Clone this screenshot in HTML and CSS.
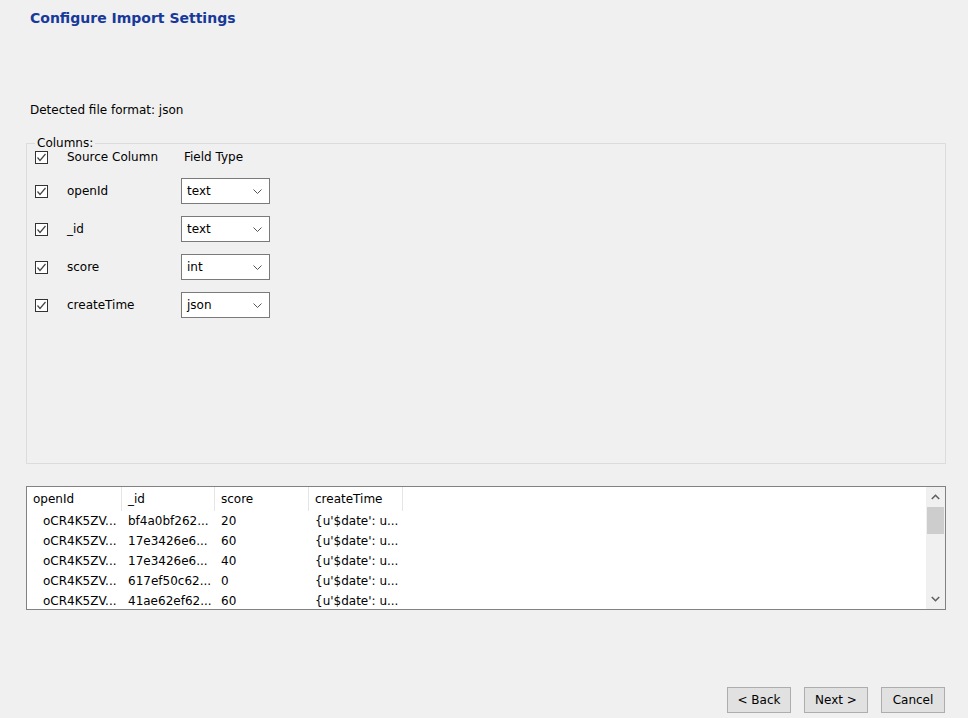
FILE: index.html
```html
<!DOCTYPE html>
<html>
<head>
<meta charset="utf-8">
<link rel="stylesheet" href="styles.css">
</head>
<body>
<div class="page">
  <h1 class="title">Configure Import Settings</h1>
  <p class="detected">Detected file format: json</p>

  <fieldset class="columns">
    <legend>Columns:</legend>
    <div class="row head">
      <span class="check"><svg viewBox="0 0 13 13" width="13" height="13"><polyline points="2.5,6.5 5,9.5 10.5,3" fill="none" stroke="#444" stroke-width="1.2"/></svg></span>
      <span class="name">Source Column</span>
      <span class="ftype">Field Type</span>
    </div>
    <div class="row">
      <span class="check"><svg viewBox="0 0 13 13" width="13" height="13"><polyline points="2.5,6.5 5,9.5 10.5,3" fill="none" stroke="#444" stroke-width="1.2"/></svg></span>
      <span class="name">openId</span>
      <span class="combo"><span>text</span><svg viewBox="0 0 9 5" width="9" height="5"><polyline points="0.5,0.5 4.5,4.5 8.5,0.5" fill="none" stroke="#555" stroke-width="1"/></svg></span>
    </div>
    <div class="row">
      <span class="check"><svg viewBox="0 0 13 13" width="13" height="13"><polyline points="2.5,6.5 5,9.5 10.5,3" fill="none" stroke="#444" stroke-width="1.2"/></svg></span>
      <span class="name">_id</span>
      <span class="combo"><span>text</span><svg viewBox="0 0 9 5" width="9" height="5"><polyline points="0.5,0.5 4.5,4.5 8.5,0.5" fill="none" stroke="#555" stroke-width="1"/></svg></span>
    </div>
    <div class="row">
      <span class="check"><svg viewBox="0 0 13 13" width="13" height="13"><polyline points="2.5,6.5 5,9.5 10.5,3" fill="none" stroke="#444" stroke-width="1.2"/></svg></span>
      <span class="name">score</span>
      <span class="combo"><span>int</span><svg viewBox="0 0 9 5" width="9" height="5"><polyline points="0.5,0.5 4.5,4.5 8.5,0.5" fill="none" stroke="#555" stroke-width="1"/></svg></span>
    </div>
    <div class="row">
      <span class="check"><svg viewBox="0 0 13 13" width="13" height="13"><polyline points="2.5,6.5 5,9.5 10.5,3" fill="none" stroke="#444" stroke-width="1.2"/></svg></span>
      <span class="name">createTime</span>
      <span class="combo"><span>json</span><svg viewBox="0 0 9 5" width="9" height="5"><polyline points="0.5,0.5 4.5,4.5 8.5,0.5" fill="none" stroke="#555" stroke-width="1"/></svg></span>
    </div>
  </fieldset>

  <div class="table">
    <div class="grid">
      <div class="thead">
        <div class="th">openId</div>
        <div class="th">_id</div>
        <div class="th">score</div>
        <div class="th">createTime</div>
      </div>
      <div class="tr"><div class="td first">oCR4K5ZV...</div><div class="td">bf4a0bf262...</div><div class="td">20</div><div class="td">{u'$date': u...</div></div>
      <div class="tr"><div class="td first">oCR4K5ZV...</div><div class="td">17e3426e6...</div><div class="td">60</div><div class="td">{u'$date': u...</div></div>
      <div class="tr"><div class="td first">oCR4K5ZV...</div><div class="td">17e3426e6...</div><div class="td">40</div><div class="td">{u'$date': u...</div></div>
      <div class="tr"><div class="td first">oCR4K5ZV...</div><div class="td">617ef50c62...</div><div class="td">0</div><div class="td">{u'$date': u...</div></div>
      <div class="tr"><div class="td first">oCR4K5ZV...</div><div class="td">41ae62ef62...</div><div class="td">60</div><div class="td">{u'$date': u...</div></div>
    </div>
    <div class="scrollbar">
      <svg class="arrow" viewBox="0 0 9 6" width="9" height="6"><polyline points="0.8,5 4.5,1.3 8.2,5" fill="none" stroke="#606060" stroke-width="1.6"/></svg>
      <div class="thumb"></div>
      <div class="track"></div>
      <svg class="arrow" viewBox="0 0 9 6" width="9" height="6"><polyline points="0.8,1 4.5,4.7 8.2,1" fill="none" stroke="#606060" stroke-width="1.6"/></svg>
    </div>
  </div>

  <div class="buttons">
    <button class="btn">&lt; Back</button>
    <button class="btn">Next &gt;</button>
    <button class="btn">Cancel</button>
  </div>
</div>
</body>
</html>
```

FILE: styles.css
```css
html, body {
  margin: 0;
  padding: 0;
  background: #f0f0f0;
}
body {
  font-family: "DejaVu Sans", Verdana, sans-serif;
  font-size: 12px;
  color: #000;
  width: 968px;
  height: 718px;
  overflow: hidden;
}
.page {
  display: flex;
  flex-direction: column;
}
.title {
  margin: 10px 0 0 30px;
  font-size: 14px;
  font-weight: bold;
  color: #17399a;
  line-height: 17px;
}
.detected {
  margin: 76px 0 0 30px;
  line-height: 14px;
}
.columns {
  margin: 19px 0 0 26px;
  width: 920px;
  box-sizing: border-box;
  height: 328px;
  border: 1px solid #dcdcdc;
  padding: 0 0 0 8px;
  display: flex;
  flex-direction: column;
}
.columns legend {
  padding: 0 2px;
  margin-left: 0;
  line-height: 14px;
}
.row {
  display: flex;
  align-items: center;
  height: 26px;
  margin-top: 12px;
}
.row.head {
  height: 18px;
  margin-top: -2px;
}
.check {
  width: 13px;
  height: 13px;
  box-sizing: border-box;
  border: 1px solid #333;
  background: #fff;
  display: flex;
}
.check svg {
  margin: -1px;
}
.name {
  margin-left: 19px;
  width: 114px;
}
.ftype {
  padding-left: 3px;
}
.combo {
  width: 89px;
  height: 26px;
  box-sizing: border-box;
  border: 1px solid #7a7a7a;
  background: #fff;
  display: flex;
  align-items: center;
  justify-content: space-between;
  padding: 0 7px 0 5px;
}
.table {
  margin: 22px 0 0 26px;
  width: 920px;
  height: 124px;
  box-sizing: border-box;
  border: 1px solid #828282;
  background: #fff;
  display: flex;
  overflow: hidden;
}
.grid {
  flex: 1;
  display: flex;
  flex-direction: column;
}
.thead, .tr {
  display: grid;
  grid-template-columns: 95px 93px 94px 94px;
}
.thead {
  height: 25px;
}
.th {
  border-right: 1px solid #e5e5e5;
  padding-left: 6px;
  line-height: 24px;
}
.tr {
  height: 20px;
  line-height: 20px;
}
.td {
  padding-left: 6px;
  white-space: nowrap;
}
.td.first {
  padding-left: 16px;
}
.scrollbar {
  width: 19px;
  background: #f0f0f0;
  display: flex;
  flex-direction: column;
  align-items: center;
}
.arrow {
  margin: 7px 0;
  flex: none;
}
.thumb {
  width: 17px;
  height: 27px;
  background: #cdcdcd;
  flex: none;
}
.track {
  flex: 1;
}
.buttons {
  margin-top: 77px;
  display: flex;
  justify-content: flex-end;
  gap: 13px;
  padding-right: 23px;
}
.btn {
  font-family: "DejaVu Sans", Verdana, sans-serif;
  font-size: 12px;
  height: 26px;
  width: 64px;
  background: #e1e1e1;
  border: 1px solid #adadad;
  padding: 0;
  color: #000;
}
```
